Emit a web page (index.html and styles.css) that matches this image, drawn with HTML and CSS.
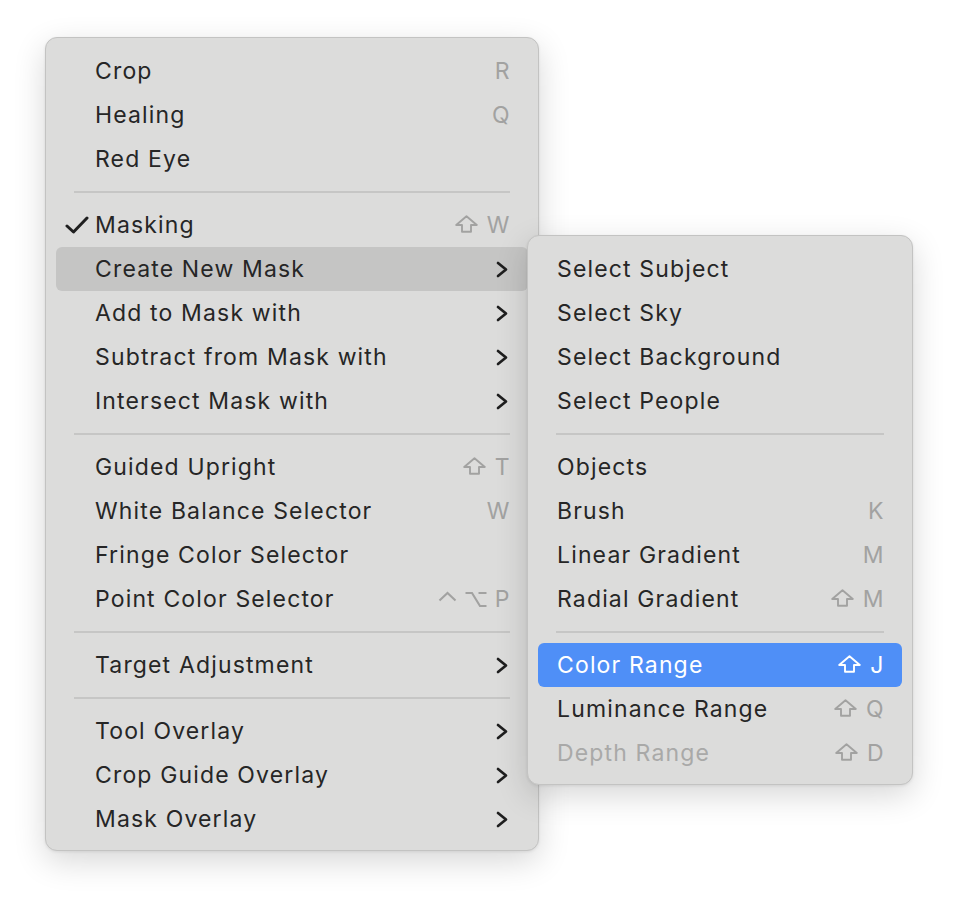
FILE: index.html
```html
<!DOCTYPE html>
<html>
<head>
<meta charset="utf-8">
<link rel="stylesheet" href="styles.css">
</head>
<body>
<div class="stage">
  <div class="menu main">
    <div class="row"><span class="check"></span><span class="label">Crop</span><span class="key">R</span></div>
    <div class="row"><span class="check"></span><span class="label">Healing</span><span class="key">Q</span></div>
    <div class="row"><span class="check"></span><span class="label">Red Eye</span></div>
    <div class="sep"></div>
    <div class="row"><span class="check"><svg width="24" height="18" viewBox="0 0 24 18"><path d="M2 10 L8.5 16 L22 2" fill="none" stroke="#1f1f1f" stroke-width="3" stroke-linecap="round" stroke-linejoin="round"/></svg></span><span class="label">Masking</span><span class="key"><svg class="shift" width="23" height="18" viewBox="0 0 23 18"><path d="M11.5 1.2 L21.8 10 H16 V16.8 H7 V10 H1.2 Z" fill="none" stroke="currentColor" stroke-width="1.9" stroke-linejoin="round"/></svg>W</span></div>
    <div class="row hover"><span class="check"></span><span class="label">Create New Mask</span><span class="chev"><svg width="12" height="17" viewBox="0 0 12 17"><path d="M2 2 L10 8.5 L2 15" fill="none" stroke="#1f1f1f" stroke-width="2.7" stroke-linecap="round" stroke-linejoin="round"/></svg></span></div>
    <div class="row"><span class="check"></span><span class="label">Add to Mask with</span><span class="chev"><svg width="12" height="17" viewBox="0 0 12 17"><path d="M2 2 L10 8.5 L2 15" fill="none" stroke="#1f1f1f" stroke-width="2.7" stroke-linecap="round" stroke-linejoin="round"/></svg></span></div>
    <div class="row"><span class="check"></span><span class="label">Subtract from Mask with</span><span class="chev"><svg width="12" height="17" viewBox="0 0 12 17"><path d="M2 2 L10 8.5 L2 15" fill="none" stroke="#1f1f1f" stroke-width="2.7" stroke-linecap="round" stroke-linejoin="round"/></svg></span></div>
    <div class="row"><span class="check"></span><span class="label">Intersect Mask with</span><span class="chev"><svg width="12" height="17" viewBox="0 0 12 17"><path d="M2 2 L10 8.5 L2 15" fill="none" stroke="#1f1f1f" stroke-width="2.7" stroke-linecap="round" stroke-linejoin="round"/></svg></span></div>
    <div class="sep"></div>
    <div class="row"><span class="check"></span><span class="label">Guided Upright</span><span class="key"><svg class="shift" width="23" height="18" viewBox="0 0 23 18"><path d="M11.5 1.2 L21.8 10 H16 V16.8 H7 V10 H1.2 Z" fill="none" stroke="currentColor" stroke-width="1.9" stroke-linejoin="round"/></svg>T</span></div>
    <div class="row"><span class="check"></span><span class="label">White Balance Selector</span><span class="key">W</span></div>
    <div class="row"><span class="check"></span><span class="label">Fringe Color Selector</span></div>
    <div class="row"><span class="check"></span><span class="label">Point Color Selector</span><span class="key"><svg class="mod caret" width="19" height="11" viewBox="0 0 19 11"><path d="M1.5 9.5 L9.5 2 L17.5 9.5" fill="none" stroke="currentColor" stroke-width="2.1"/></svg><svg class="mod" width="22" height="17" viewBox="0 0 22 17"><path d="M0.5 2 H7 L15 15 H21.5 M13.5 2 H21.5" fill="none" stroke="currentColor" stroke-width="2.1"/></svg>P</span></div>
    <div class="sep"></div>
    <div class="row"><span class="check"></span><span class="label">Target Adjustment</span><span class="chev"><svg width="12" height="17" viewBox="0 0 12 17"><path d="M2 2 L10 8.5 L2 15" fill="none" stroke="#1f1f1f" stroke-width="2.7" stroke-linecap="round" stroke-linejoin="round"/></svg></span></div>
    <div class="sep"></div>
    <div class="row"><span class="check"></span><span class="label">Tool Overlay</span><span class="chev"><svg width="12" height="17" viewBox="0 0 12 17"><path d="M2 2 L10 8.5 L2 15" fill="none" stroke="#1f1f1f" stroke-width="2.7" stroke-linecap="round" stroke-linejoin="round"/></svg></span></div>
    <div class="row"><span class="check"></span><span class="label">Crop Guide Overlay</span><span class="chev"><svg width="12" height="17" viewBox="0 0 12 17"><path d="M2 2 L10 8.5 L2 15" fill="none" stroke="#1f1f1f" stroke-width="2.7" stroke-linecap="round" stroke-linejoin="round"/></svg></span></div>
    <div class="row"><span class="check"></span><span class="label">Mask Overlay</span><span class="chev"><svg width="12" height="17" viewBox="0 0 12 17"><path d="M2 2 L10 8.5 L2 15" fill="none" stroke="#1f1f1f" stroke-width="2.7" stroke-linecap="round" stroke-linejoin="round"/></svg></span></div>
  </div>

  <div class="menu sub">
    <div class="row"><span class="label">Select Subject</span></div>
    <div class="row"><span class="label">Select Sky</span></div>
    <div class="row"><span class="label">Select Background</span></div>
    <div class="row"><span class="label">Select People</span></div>
    <div class="sep"></div>
    <div class="row"><span class="label">Objects</span></div>
    <div class="row"><span class="label">Brush</span><span class="key">K</span></div>
    <div class="row"><span class="label">Linear Gradient</span><span class="key">M</span></div>
    <div class="row"><span class="label">Radial Gradient</span><span class="key"><svg class="shift" width="23" height="18" viewBox="0 0 23 18"><path d="M11.5 1.2 L21.8 10 H16 V16.8 H7 V10 H1.2 Z" fill="none" stroke="currentColor" stroke-width="1.9" stroke-linejoin="round"/></svg>M</span></div>
    <div class="sep"></div>
    <div class="row selected"><span class="label">Color Range</span><span class="key"><svg class="shift" width="23" height="18" viewBox="0 0 23 18"><path d="M11.5 1.2 L21.8 10 H16 V16.8 H7 V10 H1.2 Z" fill="none" stroke="currentColor" stroke-width="1.9" stroke-linejoin="round"/></svg>J</span></div>
    <div class="row"><span class="label">Luminance Range</span><span class="key"><svg class="shift" width="23" height="18" viewBox="0 0 23 18"><path d="M11.5 1.2 L21.8 10 H16 V16.8 H7 V10 H1.2 Z" fill="none" stroke="currentColor" stroke-width="1.9" stroke-linejoin="round"/></svg>Q</span></div>
    <div class="row disabled"><span class="label">Depth Range</span><span class="key"><svg class="shift" width="23" height="18" viewBox="0 0 23 18"><path d="M11.5 1.2 L21.8 10 H16 V16.8 H7 V10 H1.2 Z" fill="none" stroke="currentColor" stroke-width="1.9" stroke-linejoin="round"/></svg>D</span></div>
  </div>
</div>
</body>
</html>
```

FILE: styles.css
```css
html, body {
  margin: 0;
  padding: 0;
  background: #ffffff;
}

body {
  font-family: Inter, "Noto Sans", "Liberation Sans", sans-serif;
  font-size: 23px;
  color: #262626;
}

.stage {
  position: relative;
  width: 958px;
  height: 904px;
  padding: 37px 0 0 45px;
  box-sizing: border-box;
}

.menu {
  background: #dcdcdb;
  border: 1px solid #c3c3c2;
  border-radius: 12px;
  box-sizing: border-box;
  box-shadow: 0 10px 32px rgba(0, 0, 0, 0.16), 0 1px 3px rgba(0, 0, 0, 0.08);
  padding: 11px 10px 9px;
  display: flex;
  flex-direction: column;
}

.main {
  width: 494px;
  height: 814px;
}

.sub {
  position: absolute;
  left: 527px;
  top: 235px;
  width: 386px;
  height: 550px;
}

.row {
  height: 44px;
  display: flex;
  align-items: center;
  border-radius: 6px;
  padding: 0 18px 0 9px;
  white-space: nowrap;
}

.sub .row {
  padding-left: 19px;
}

.row.hover {
  background: #c5c5c4;
}

.row.selected {
  background: #4f8ff7;
  color: #ffffff;
}

.row.selected .key {
  color: #ffffff;
}

.row.disabled .label {
  color: #a9a9a8;
}

.check {
  width: 30px;
  flex: none;
  display: flex;
  align-items: center;
}

.label {
  flex: 1;
  letter-spacing: 1.15px;
}

.key {
  display: flex;
  align-items: center;
  color: #a2a2a1;
  letter-spacing: 0.5px;
}

.shift {
  margin-right: 9px;
  margin-top: -2px;
}

.mod {
  margin-right: 8px;
}

.caret {
  margin-top: -6px;
}

.chev {
  display: flex;
  align-items: center;
  margin-right: 2px;
}

.sep {
  height: 22px;
  margin: 0 18px;
  display: flex;
  align-items: center;
}

.sep::before {
  content: "";
  display: block;
  width: 100%;
  height: 2px;
  background: #c6c6c5;
}
```
